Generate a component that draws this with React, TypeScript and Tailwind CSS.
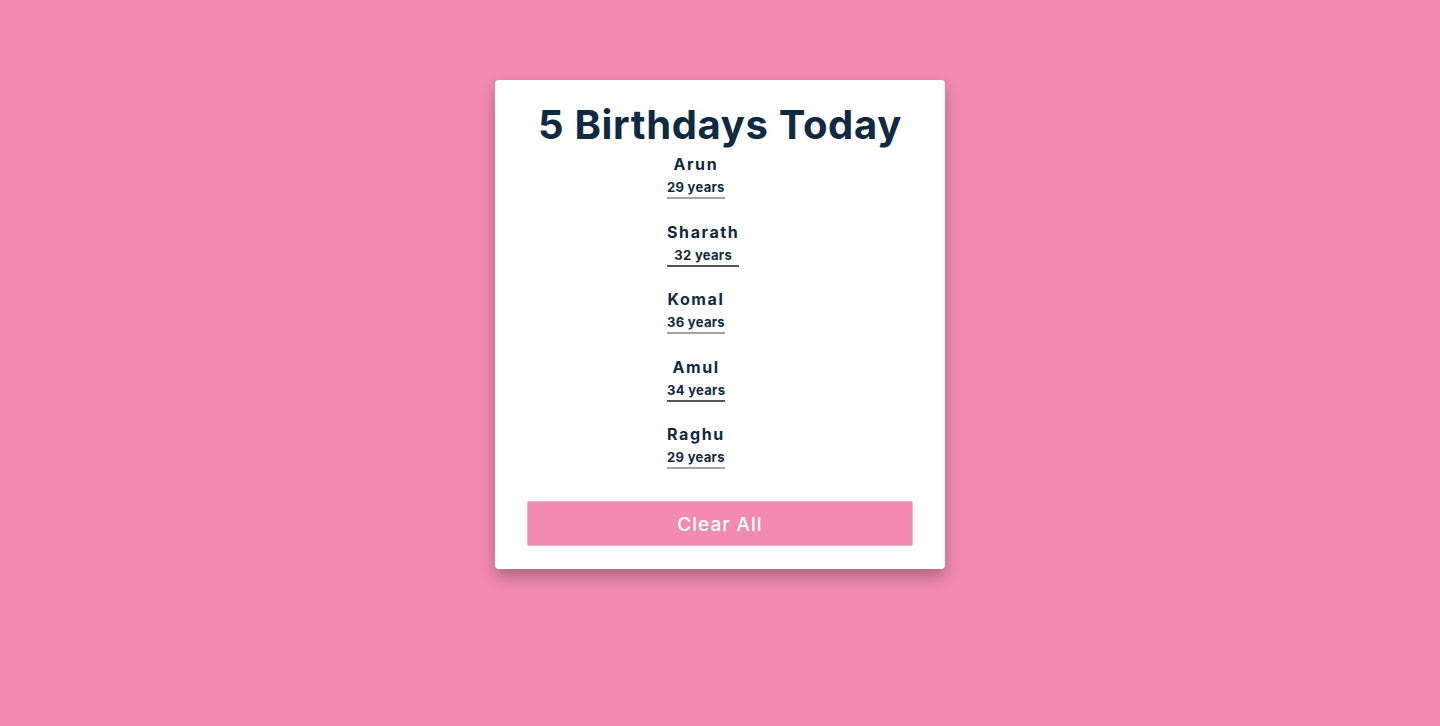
import React, { useState } from 'react';

interface Person {
  id: number;
  name: string;
  age: number;
}

const people: Person[] = [
  { id: 1, name: 'Arun', age: 29 },
  { id: 2, name: 'Sharath', age: 32 },
  { id: 3, name: 'Komal', age: 36 },
  { id: 4, name: 'Amul', age: 34 },
  { id: 5, name: 'Raghu', age: 29 },
];

const App: React.FC = () => {
  const [list, setList] = useState<Person[]>(people);

  return (
    <main
      className="min-h-screen bg-[#f38bb1] flex justify-center pt-20"
      style={{ fontFamily: 'Inter, "Noto Sans", sans-serif' }}
    >
      <section className="w-[450px] h-fit bg-white rounded-[4px] px-8 pt-5 pb-[23px] shadow-[0_8px_16px_rgba(0,0,0,0.28)] text-[#102a42]">
        <h2 className="text-center text-[40px] leading-[50px] font-bold tracking-[0.65px]">
          {list.length} Birthdays Today
        </h2>

        <div className="flex flex-col items-start pl-[140px] mt-[1px]">
          {list.map((person, i) => (
            <article
              key={person.id}
              className={`flex flex-col items-center border-b-2 mb-[19.5px] last:mb-0 ${
                i % 2 === 1 ? 'border-[#555]' : 'border-[#a3a3a3]'
              }`}
            >
              <h4 className="text-[16px] leading-[26px] font-bold tracking-[1.6px]">{person.name}</h4>
              <p className="text-[13px] leading-5 font-bold tracking-[0.3px]">{person.age} years</p>
            </article>
          ))}
        </div>

        <button
          onClick={() => setList([])}
          className="mt-[32px] w-full h-[45px] pt-[3px] bg-[#f38bb1] border border-[#f7aec9] rounded-[2px] text-white text-[19px] font-medium tracking-[1px]"
        >
          Clear All
        </button>
      </section>
    </main>
  );
};

export default App;
